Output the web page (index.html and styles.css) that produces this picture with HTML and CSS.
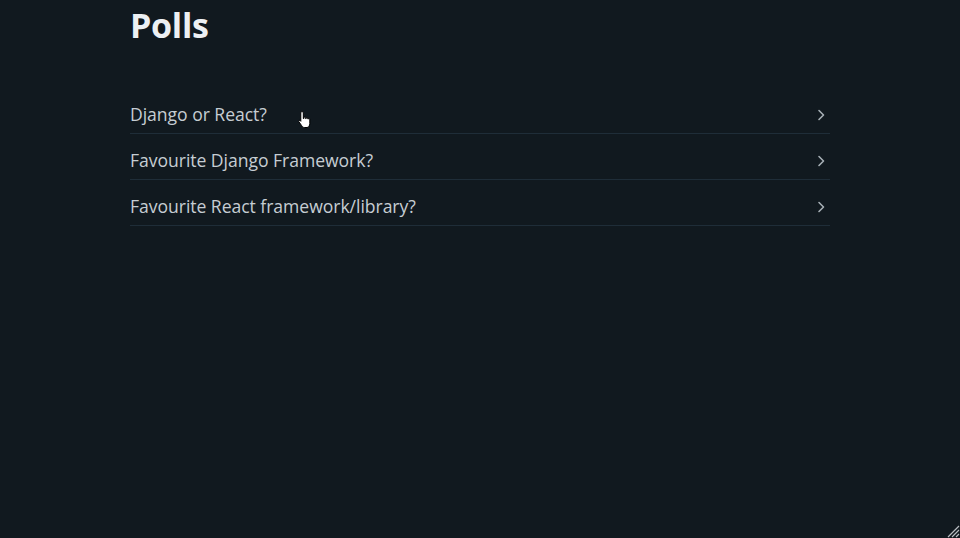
FILE: index.html
```html
<!DOCTYPE html>
<html lang="en">
<head>
<meta charset="utf-8">
<title>Polls</title>
<link rel="stylesheet" href="styles.css">
</head>
<body>
<main class="container">
  <h1 class="title">Polls</h1>
  <ul class="polls">
    <li class="poll"><a href="#" class="poll-link"><span>Django or React?</span><svg class="chev" viewBox="0 0 10 14" width="10" height="14"><path d="M3 2.5 L7.5 7 L3 11.5" fill="none" stroke="currentColor" stroke-width="1.6" stroke-linecap="round" stroke-linejoin="round"/></svg></a></li>
    <li class="poll"><a href="#" class="poll-link"><span>Favourite Django Framework?</span><svg class="chev" viewBox="0 0 10 14" width="10" height="14"><path d="M3 2.5 L7.5 7 L3 11.5" fill="none" stroke="currentColor" stroke-width="1.6" stroke-linecap="round" stroke-linejoin="round"/></svg></a></li>
    <li class="poll"><a href="#" class="poll-link"><span>Favourite React framework/library?</span><svg class="chev" viewBox="0 0 10 14" width="10" height="14"><path d="M3 2.5 L7.5 7 L3 11.5" fill="none" stroke="currentColor" stroke-width="1.6" stroke-linecap="round" stroke-linejoin="round"/></svg></a></li>
  </ul>
</main>
<svg class="cursor" viewBox="0 0 16 20" width="16" height="20">
  <path d="M5 1.5 C5.8 1.5 6.3 2 6.3 2.8 L6.3 8.5 L7 8.5 L7 7.6 C7 6.9 8.6 6.9 8.6 7.6 L8.6 8.6 L9.2 8.6 L9.2 8 C9.2 7.3 10.8 7.3 10.8 8 L10.8 9 L11.3 9 C11.3 8.4 12.8 8.4 12.8 9.1 L12.8 13.5 C12.8 15.5 11.6 17.5 10 17.5 L7.3 17.5 C6 17.5 5.3 16.6 4.5 15.4 L1.8 11.6 C1.3 10.8 2.4 10 3.1 10.6 L3.8 11.3 L3.8 2.8 C3.8 2 4.2 1.5 5 1.5 Z" fill="#ffffff" stroke="#000000" stroke-width="1"/>
</svg>
<svg class="grip" viewBox="0 0 14 14" width="14" height="14">
  <path d="M13 2 L2 13 M13 6 L6 13 M13 10 L10 13" stroke="#b8bcc0" stroke-width="1.2"/>
</svg>
</body>
</html>
```
FILE: styles.css
```css
html, body {
  margin: 0;
  padding: 0;
  background: #11191f;
  height: 100%;
}
body {
  font-family: "Open Sans", "Noto Sans", sans-serif;
  color: #bbc6ce;
  overflow: hidden;
}
.container {
  width: 700px;
  margin: 0 auto;
  padding-top: 0;
}
.title {
  margin: 0;
  padding-top: 3px;
  font-size: 34px;
  line-height: 44px;
  font-weight: 700;
  color: #edf0f3;
  letter-spacing: -0.3px;
}
.polls {
  list-style: none;
  margin: 41px 0 0;
  padding: 0;
}
.poll {
  border-bottom: 1px solid #1f2d38;
}
.poll-link {
  display: flex;
  align-items: center;
  justify-content: space-between;
  padding: 13px 0 5px;
  line-height: 27px;
  font-size: 17.6px;
  letter-spacing: -0.05px;
  color: #c6cdd3;
  text-decoration: none;
}
.chev {
  color: #a6aeb5;
  margin-right: 4px;
  margin-top: 0;
}
.cursor {
  position: absolute;
  left: 297px;
  top: 110px;
}
.grip {
  position: absolute;
  right: 0;
  bottom: 0;
}
```
